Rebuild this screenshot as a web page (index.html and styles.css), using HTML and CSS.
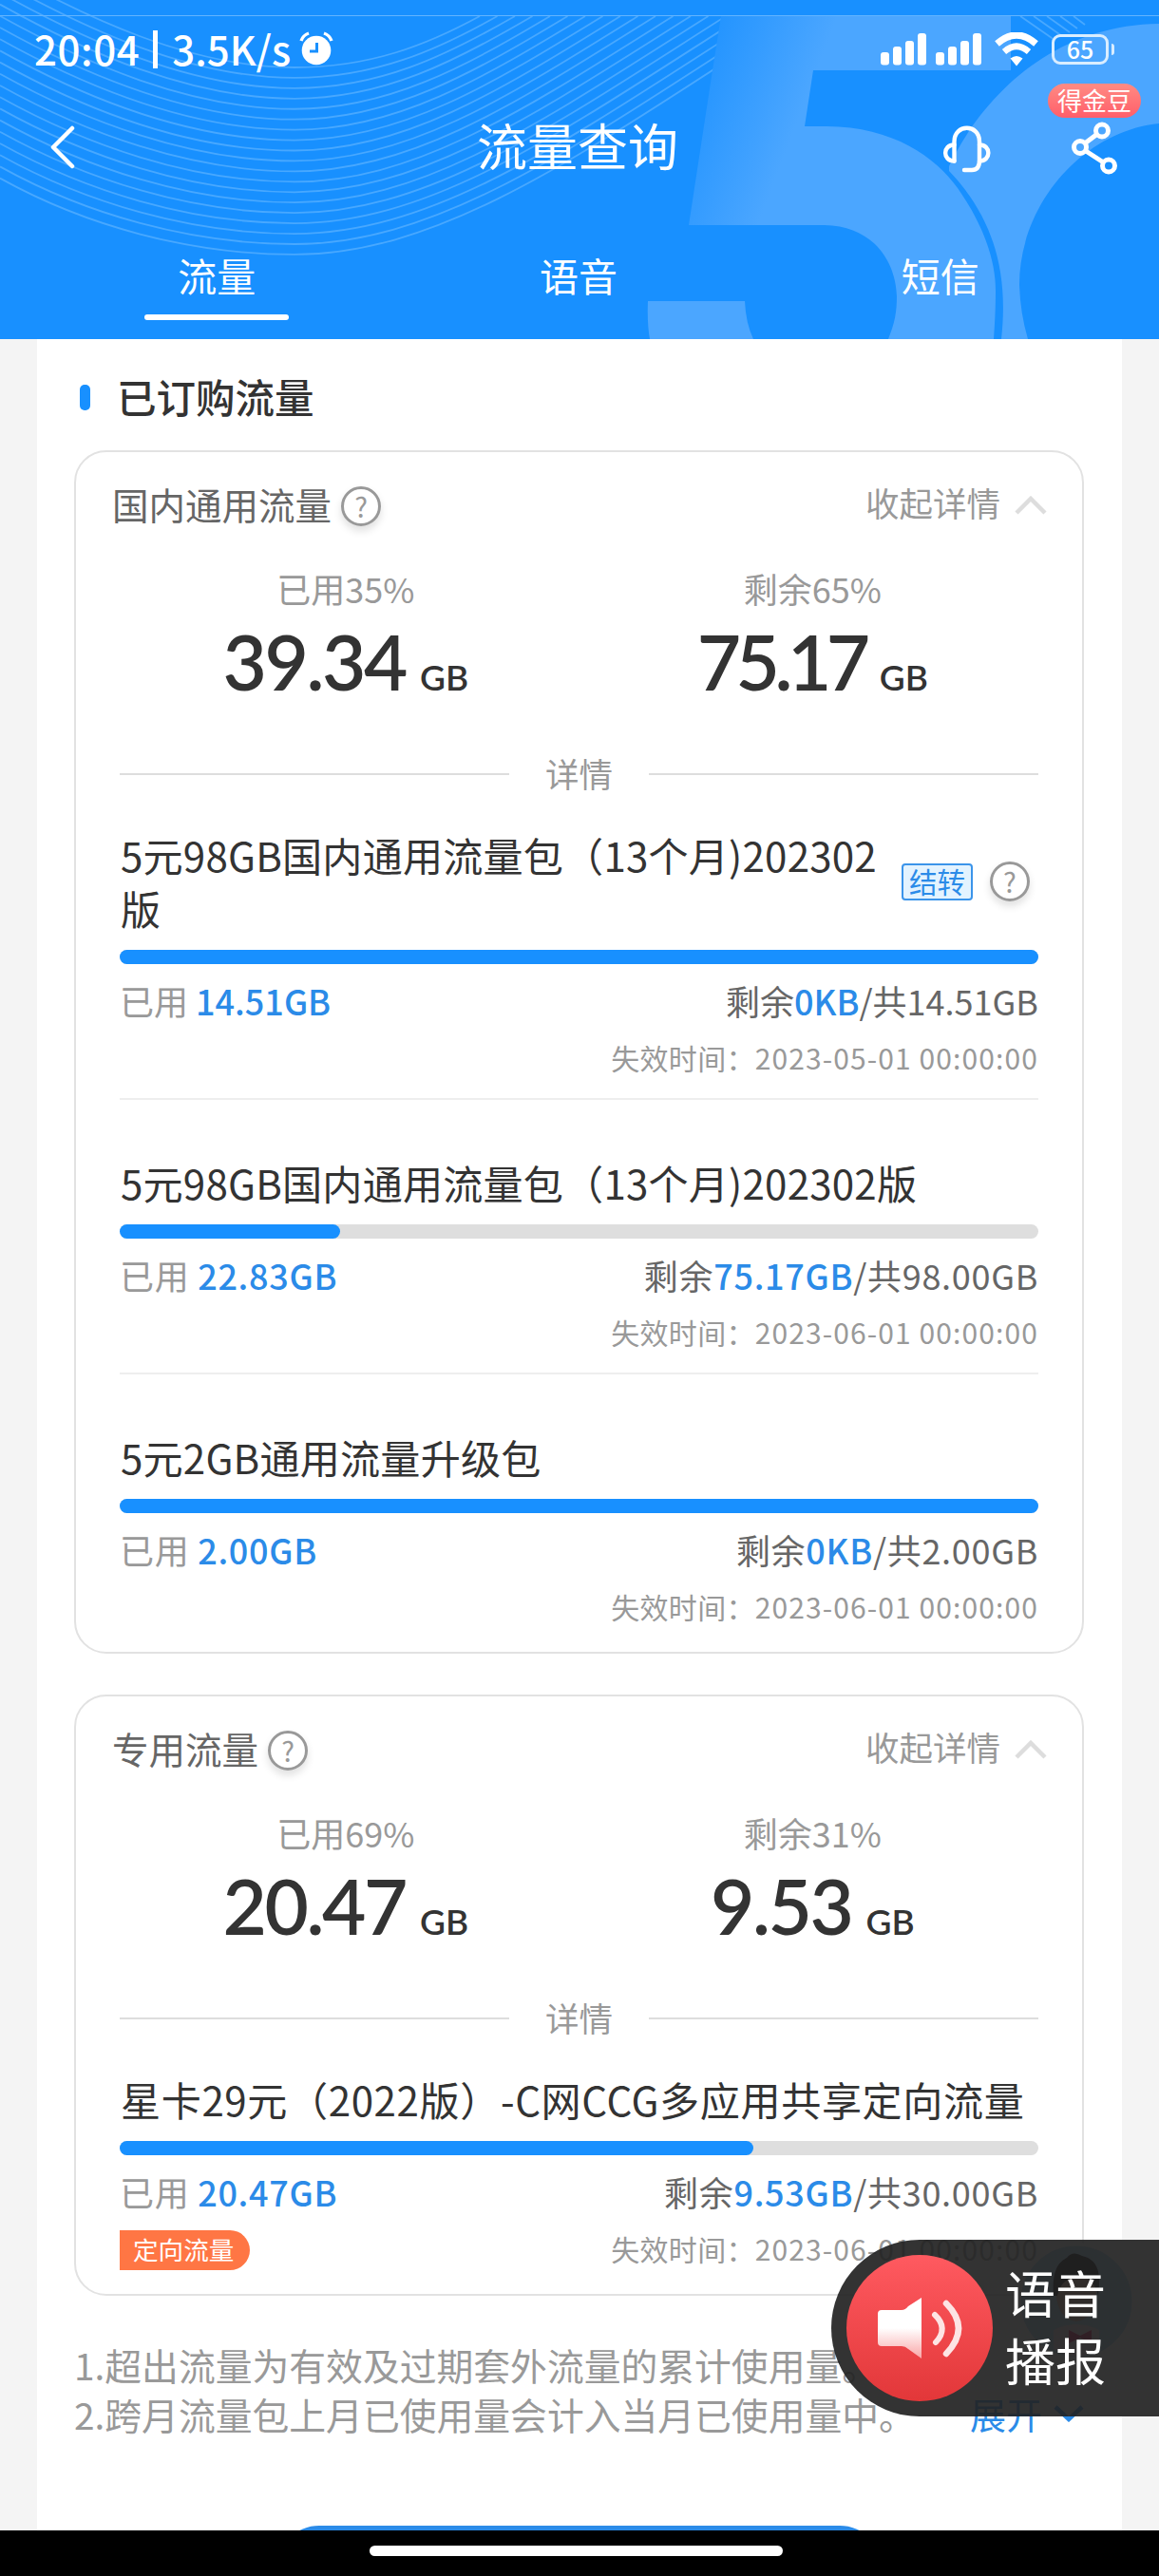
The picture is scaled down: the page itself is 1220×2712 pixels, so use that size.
FILE: index.html
```html
<!DOCTYPE html>
<html lang="zh-CN">
<head>
<meta charset="utf-8">
<title>流量查询</title>
<link rel="stylesheet" href="styles.css">
</head>
<body>

<div class="page">

  <div class="header">
    <svg class="header-bg" width="1220" height="357" viewBox="0 0 1220 357">
      <defs>
        <linearGradient id="five" gradientUnits="userSpaceOnUse" x1="745" y1="60" x2="850" y2="100">
          <stop offset="0" stop-color="#2595ff"/>
          <stop offset="1" stop-color="#4ba6ff"/>
        </linearGradient>
      </defs>
      <g id="rings"></g>
      <!-- 5 -->
      <path fill="url(#five)" d="M759 17H1064V74H856L847 133H870C940 133 985 166 1008 198C1036 238 1048 275 1048 306C1048 326 1047 343 1046 357H935C942 340 944 328 944 312C943 276 920 238 868 237H725L750 74Z"/>
      <path fill="#4ba6ff" d="M682 317H784Q785 340 793 357H684Q681 340 682 317Z"/>
      <!-- G -->
      <path fill="#4ba6ff" d="M999 175C1035 100 1110 26 1220 25V130C1140 138 1073 215 1073 300Q1074 330 1082 357H1054C1062 285 1045 228 999 180Z"/>
      <path d="M0 16.5H1220" stroke="#62b4ff" stroke-width="1"/>
    </svg>

    <div class="statusbar">
      <span class="clock">20:04</span><i class="bar"></i><span class="speed">3.5K/s</span>
      <svg class="alarm" width="36" height="36" viewBox="0 0 36 36">
        <circle cx="18" cy="20" r="15.3" fill="#fff"/>
        <path d="M2 10Q4 4 10 2M34 10Q32 4 26 2" stroke="#fff" stroke-width="3.4" fill="none"/>
        <path d="M18.5 12V21H11" stroke="#1890ff" stroke-width="3" fill="none"/>
      </svg>
      <div class="signals">
        <svg width="48" height="34" viewBox="0 0 48 34" fill="#fff"><rect y="20" width="9" height="13.5" rx="3"/><rect x="13" y="14" width="9" height="19.5" rx="3"/><rect x="26" y="8" width="9" height="25.5" rx="3"/><rect x="39" y="0" width="9" height="33.5" rx="3"/></svg>
        <svg width="48" height="34" viewBox="0 0 48 34" fill="#fff"><rect y="20" width="9" height="13.5" rx="3"/><rect x="13" y="14" width="9" height="19.5" rx="3"/><rect x="26" y="8" width="9" height="25.5" rx="3"/><rect x="39" y="0" width="9" height="33.5" rx="3"/></svg>
        <svg class="wifi" width="46" height="36" viewBox="0 0 46 36">
          <path d="M2.5 12Q23 -6 43.5 12" fill="none" stroke="#fff" stroke-width="7"/>
          <path d="M10 20.5Q23 9 36 20.5" fill="none" stroke="#fff" stroke-width="6.5"/>
          <path d="M16.5 27.5Q23 22.5 29.5 27.5L23 35.5Z" fill="#fff"/>
        </svg>
        <div class="battery">65</div><i class="battery-nub"></i>
      </div>
    </div>

    <div class="navbar">
      <svg class="back" width="28" height="46" viewBox="0 0 28 46"><path d="M24 3L4 23L24 43" fill="none" stroke="#fff" stroke-width="4.5" stroke-linecap="round" stroke-linejoin="round"/></svg>
      <h1>流量查询</h1>
      <svg class="headset" width="52" height="52" viewBox="0 0 52 52" fill="none" stroke="#fff" stroke-width="4.4" stroke-linecap="round" stroke-linejoin="round">
        <path d="M13.5 38.5V18C13.5 -1 40 -1 40 18V38Q40 48 32 48H24"/>
        <path d="M13.5 21.5C1 21.5 1 38.5 13.5 38.5M40 21.5C52.5 21.5 52.5 38.5 40 38.5"/>
      </svg>
      <div class="share">
        <svg width="50" height="58" viewBox="0 0 50 58" fill="none" stroke="#fff" stroke-width="5">
          <circle cx="33" cy="9.5" r="6.5"/><circle cx="10" cy="27" r="6.5"/><circle cx="40" cy="46.5" r="6.5"/>
          <path d="M27.5 13.5L15.5 22.5M16 31L34.5 43"/>
        </svg>
        <span class="share-badge">得金豆</span>
      </div>
    </div>

    <div class="tabs">
      <div class="tab active">流量</div>
      <div class="tab">语音</div>
      <div class="tab">短信</div>
    </div>
  </div>

  <div class="content">
    <h2 class="section-title">已订购流量</h2>

    <div class="card">
      <div class="card-head">
        <span class="name">国内通用流量</span><span class="help">?</span>
        <span class="toggle">收起详情</span>
        <svg width="34" height="20" viewBox="0 0 34 20"><path d="M2 18L17 3L32 18" fill="none" stroke="#ddd" stroke-width="4.5"/></svg>
      </div>
      <div class="summary">
        <div class="col"><p>已用35%</p><div class="num">39.34<small>GB</small></div></div>
        <div class="col"><p>剩余65%</p><div class="num tight">75.17<small>GB</small></div></div>
      </div>
      <div class="divider">详情</div>

      <div class="item">
        <div class="item-title">
          <span class="text">5元98GB国内通用流量包（13个月)202302版</span>
          <span class="carry">结转</span><span class="help">?</span>
        </div>
        <div class="progress"><div class="fill" style="width: 100%"></div></div>
        <div class="usage"><span class="used">已用 <b>14.51GB</b></span><span>剩余<b>0KB</b>/共14.51GB</span></div>
        <div class="expire">失效时间：<span class="date">2023-05-01 00:00:00</span></div>
      </div>

      <div class="item">
        <div class="item-title"><span class="text">5元98GB国内通用流量包（13个月)202302版</span></div>
        <div class="progress"><div class="fill" style="width: 24%"></div></div>
        <div class="usage wide"><span class="used">已用 <b>22.83GB</b></span><span>剩余<b>75.17GB</b>/共98.00GB</span></div>
        <div class="expire">失效时间：<span class="date">2023-06-01 00:00:00</span></div>
      </div>

      <div class="item">
        <div class="item-title"><span class="text">5元2GB通用流量升级包</span></div>
        <div class="progress"><div class="fill" style="width: 100%"></div></div>
        <div class="usage wide"><span class="used">已用 <b>2.00GB</b></span><span>剩余<b>0KB</b>/共2.00GB</span></div>
        <div class="expire">失效时间：<span class="date">2023-06-01 00:00:00</span></div>
      </div>
    </div>

    <div class="card">
      <div class="card-head">
        <span class="name">专用流量</span><span class="help">?</span>
        <span class="toggle">收起详情</span>
        <svg width="34" height="20" viewBox="0 0 34 20"><path d="M2 18L17 3L32 18" fill="none" stroke="#ddd" stroke-width="4.5"/></svg>
      </div>
      <div class="summary">
        <div class="col"><p>已用69%</p><div class="num">20.47<small>GB</small></div></div>
        <div class="col"><p>剩余31%</p><div class="num">9.53<small>GB</small></div></div>
      </div>
      <div class="divider">详情</div>

      <div class="item">
        <div class="item-title wide"><span class="text">星卡29元（2022版）-C网CCG多应用共享定向流量</span></div>
        <div class="progress"><div class="fill" style="width: 69%"></div></div>
        <div class="usage wide"><span class="used">已用 <b>20.47GB</b></span><span>剩余<b>9.53GB</b>/共30.00GB</span></div>
        <div class="expire"><span class="direct">定向流量</span>失效时间：<span class="date">2023-06-01 00:00:00</span></div>
      </div>
    </div>

    <div class="notes">
      <p>1.超出流量为有效及过期套外流量的累计使用量。</p>
      <p>2.跨月流量包上月已使用量会计入当月已使用量中。
        <span class="more">展开<svg width="32" height="18" viewBox="0 0 32 18"><path d="M2 2L16 15L30 2" fill="none" stroke="#2b8be8" stroke-width="4.5"/></svg></span>
      </p>
    </div>
    <div class="main-btn"></div>
  </div>

  <div class="homebar"><i></i></div>

  <!-- floating customer service avatar, mostly hidden by the voice button -->
  <svg class="avatar" width="124" height="124" viewBox="0 0 124 124">
    <circle cx="62" cy="62" r="60" fill="#a4d0ee" stroke="#fff" stroke-width="3"/>
    <path d="M38 92Q62 80 86 92V112Q62 128 38 112Z" fill="#f0d8dc"/>
    <ellipse cx="62" cy="55" rx="21" ry="28" fill="#d0a090"/>
    <path d="M38 56C36 26 45 20 52 16Q58 8 68 14C86 18 88 34 85 56Q80 36 66 36Q46 36 42 56Z" fill="#000"/>
    <path d="M66 98L54 92V106L66 100L78 106V92Z" fill="#d8004b"/>
  </svg>

  <div class="voice">
    <div class="voice-icon">
      <svg width="154" height="154" viewBox="0 0 154 154">
        <defs><linearGradient id="spk" x1="0" y1="0" x2="0" y2="1"><stop offset="0.5" stop-color="#fff"/><stop offset="1" stop-color="#f9a5a6"/></linearGradient></defs>
        <path d="M37 58H58Q62 58 65 54L79 45V109L65 99Q62 96 58 96H37Q33 96 33 92V62Q33 58 37 58Z" fill="url(#spk)"/>
        <path d="M93 63Q108 77 94 92" fill="none" stroke="#fde4e4" stroke-width="6" stroke-linecap="round"/>
        <path d="M105 51Q131 77 105 104" fill="none" stroke="#fde4e4" stroke-width="6.5" stroke-linecap="round"/>
      </svg>
    </div>
    <div class="voice-text">语音<br>播报</div>
  </div>

</div>

<script>
// curved lines in the header background
var rings = "";
for (var i = 0; i < 19; i++) {
    var t = i / 18;
    var left = -32 + 12.2 * i;
    var bottom = 71 + 10.94 * i;
    var right = 505 + 18.5 * i;
    rings += "<path d='M0 " + left + "C90 " + (left + 50) + " 200 " + bottom + " 310 " + bottom +
        "C" + (390 + 80 * t) + " " + bottom + " " + (right - 55 - 160 * t) + " " + (47 + 108 * t) + " " + right + " 17'/>";
}
for (i = 0; i < 5; i++) {
    rings += "<path d='M" + (1074 + i * 14) + " 17L" + (1110 + i * 8) + " " + (42 - i * 4) + "'/>";
}
document.getElementById("rings").innerHTML = rings;
</script>

</body>
</html>
```
FILE: styles.css
```css
* {
    box-sizing: border-box;
}

body {
    margin: 0;
    font-family: "Noto Sans CJK SC", "Noto Sans", sans-serif;
    color: #333;
    background: #f4f4f4;
}

h1, h2, p {
    margin: 0;
    font-weight: 400;
}

.page {
    position: relative;
    width: 1220px;
    height: 2712px;
    overflow: hidden;
    display: flex;
    flex-direction: column;
}

/* header */
.header {
    position: relative;
    flex: none;
    height: 357px;
    background: #1890ff;
    color: #fff;
    overflow: hidden;
}

.header-bg {
    position: absolute;
    left: 0;
    top: 0;
}

#rings {
    fill: none;
    stroke: #48a8ff;
    stroke-width: 1.8;
}

.statusbar {
    position: relative;
    display: flex;
    align-items: center;
    height: 104px;
    padding: 0 47px 0 36px;
    font-size: 42px;
    font-weight: 500;
}

.clock,
.speed {
    margin-top: -4px;
}

.clock {
    letter-spacing: 0.6px;
}

.statusbar .bar {
    flex: none;
    width: 5px;
    height: 40px;
    margin: 0 15px 0 14px;
    background: #fff;
}

.alarm {
    margin-left: 9px;
    margin-top: -2px;
}

.signals {
    display: flex;
    align-items: center;
    margin-left: auto;
    gap: 10px;
}

.wifi {
    margin: 0 4px;
}

.battery {
    width: 60px;
    height: 32px;
    border: 3px solid #d9edff;
    border-radius: 9px;
    font-size: 25px;
    line-height: 25px;
    text-align: center;
}

.battery-nub {
    width: 3px;
    height: 12px;
    margin-left: -7px;
    border-radius: 0 3px 3px 0;
    background: #d9edff;
}

.navbar {
    position: relative;
    display: flex;
    align-items: center;
    height: 102px;
    padding: 0 43px 0 52px;
}

.navbar h1 {
    width: 208px;
    margin: -5px 0 0 422px;
    font-size: 53px;
    line-height: 97px;
    white-space: nowrap;
}

.headset {
    margin-left: auto;
    margin-right: 84px;
    margin-top: 4px;
}

.share {
    position: relative;
    height: 58px;
    margin-top: 3px;
}

.share-badge {
    position: absolute;
    left: -24px;
    top: -40px;
    width: 98px;
    height: 36px;
    border-radius: 18px;
    background: linear-gradient(#ff8b83, #ff5e6a);
    font-size: 26px;
    line-height: 34px;
    text-align: center;
}

.tabs {
    position: relative;
    display: flex;
    padding: 0 40px 0 38px;
}

.tab {
    flex: 1;
    height: 131px;
    padding-top: 54px;
    font-size: 41px;
    line-height: 58px;
    text-align: center;
}

.tab.active::after {
    content: "";
    display: block;
    width: 152px;
    height: 6px;
    margin: 13px auto 0;
    border-radius: 3px;
    background: #fff;
}

/* content */
.content {
    flex: 1;
    min-height: 0;
    overflow: hidden;
    margin: 0 39px;
    padding: 0 40px 0 39px;
    background: #fff;
}

.section-title {
    display: flex;
    align-items: center;
    height: 117px;
    padding: 2px 0 0 6px;
    font-size: 41.5px;
    font-weight: 500;
}

.section-title::before {
    content: "";
    width: 11px;
    height: 27px;
    margin: 3px 28px 0 0;
    border-radius: 5px;
    background: #1890ff;
}

.card {
    margin-bottom: 43px;
    padding: 0 46px 14px 46px;
    border: 2px solid #e2e2e2;
    border-radius: 34px;
}

.card-head {
    display: flex;
    align-items: center;
    height: 112px;
    margin: 0 -9px 0 -8px;
    font-size: 38.5px;
    color: #666;
}

.card-head .name {
    margin-top: -4px;
}

.card-head .toggle {
    margin: -7px 15px 0 auto;
    font-size: 35.5px;
    color: #999;
}

.help {
    flex: none;
    width: 42px;
    height: 42px;
    border: 3px solid #999;
    border-radius: 50%;
    box-shadow: 0 5px 8px rgba(0, 0, 0, 0.12);
    font-size: 29px;
    line-height: 35px;
    text-align: center;
    color: #999;
}

.card-head .help {
    margin: 2px 0 0 10px;
}

.summary {
    display: flex;
    margin: 0 -8px;
}

.col {
    flex: 1;
    height: 200px;
    text-align: center;
}

.col p {
    font-size: 36px;
    line-height: 62px;
    color: #999;
}

.num {
    font-family: Lato, "Noto Sans CJK SC", sans-serif;
    font-size: 80px;
    font-weight: 600;
    line-height: 92px;
    letter-spacing: -2.4px;
}

.num.tight {
    letter-spacing: -5.5px;
}

.num small {
    margin-left: 15px;
    font-size: 37px;
    line-height: 40px;
    letter-spacing: 0;
}

.divider {
    display: flex;
    align-items: center;
    height: 54px;
    margin-top: -1px;
    font-size: 35.5px;
    line-height: 50px;
    color: #999;
    gap: 38px;
}

.divider::before,
.divider::after {
    content: "";
    flex: 1;
    height: 2px;
    margin-top: 1px;
    background: #ddd;
}

.item {
    padding: 59px 0 13px;
    border-bottom: 2px solid #eee;
}

.divider + .item {
    padding-top: 31px;
}

.item:last-child {
    padding-bottom: 4px;
    border-bottom: none;
}

.item-title {
    display: flex;
    align-items: center;
    padding-left: 1px;
    letter-spacing: 0.2px;
}

.item-title.wide {
    letter-spacing: 0.6px;
}

.item-title .text {
    flex: 1;
    font-size: 42.1px;
    line-height: 56px;
}

.carry {
    width: 75px;
    height: 39px;
    margin: 1px 18px 0 20px;
    border: 2px solid #3b94ea;
    border-radius: 4px;
    background: #e3f3ff;
    font-size: 29.5px;
    line-height: 33px;
    letter-spacing: 0;
    text-align: center;
    color: #2b8be8;
}

.item-title .help {
    margin-right: 9px;
}

.progress {
    height: 15px;
    margin-top: 16px;
    border-radius: 8px;
    background: #dedede;
}

.fill {
    height: 15px;
    border-radius: 8px;
    background: #1890ff;
}

.usage {
    display: flex;
    justify-content: space-between;
    margin-top: 8px;
    font-size: 36px;
    line-height: 60px;
    color: #666;
}

.usage.wide {
    letter-spacing: 0.7px;
}

.usage b {
    font-weight: 500;
    color: #2b8be8;
}

.used {
    color: #999;
}

.expire {
    display: flex;
    justify-content: flex-end;
    align-items: center;
    height: 60px;
    font-size: 30px;
    letter-spacing: 0.3px;
    color: #999;
}

.date {
    letter-spacing: 1.1px;
}

.direct {
    width: 137px;
    height: 42px;
    margin: 3px auto 0 0;
    padding-left: 14px;
    border-radius: 0 21px 21px 0;
    background: #ff7644;
    font-size: 26.6px;
    line-height: 40px;
    letter-spacing: 0;
    color: #fff;
}

.notes {
    padding-top: 3px;
    font-size: 38.8px;
    line-height: 52px;
    color: #999;
}

.notes p {
    display: flex;
    white-space: nowrap;
}

.more {
    display: flex;
    align-items: center;
    margin-left: auto;
    font-size: 38px;
    color: #2b8be8;
}

.more svg {
    margin-left: 12px;
}

.main-btn {
    width: 638px;
    height: 90px;
    margin: 92px auto 0;
    border-radius: 45px;
    background: #2b8be8;
}

.homebar {
    flex: none;
    display: flex;
    justify-content: center;
    height: 48px;
    padding: 16px 7px 0 0;
    background: #000;
}

.homebar i {
    width: 435px;
    height: 11px;
    border-radius: 6px;
    background: #fff;
}

/* floating voice button */
.avatar {
    position: absolute;
    left: 1071px;
    top: 2361px;
}

.voice {
    position: absolute;
    right: 0;
    top: 2358px;
    display: flex;
    align-items: center;
    width: 345px;
    height: 186px;
    padding-left: 16px;
    border-radius: 93px 0 0 93px;
    background: rgba(34, 34, 34, 0.92);
    color: #fff;
}

.voice-icon {
    width: 154px;
    height: 154px;
    border-radius: 50%;
    background: linear-gradient(#ff5a60, #e23739);
}

.voice-text {
    margin: -4px 0 0 13px;
    font-size: 53px;
    line-height: 71px;
}
```
